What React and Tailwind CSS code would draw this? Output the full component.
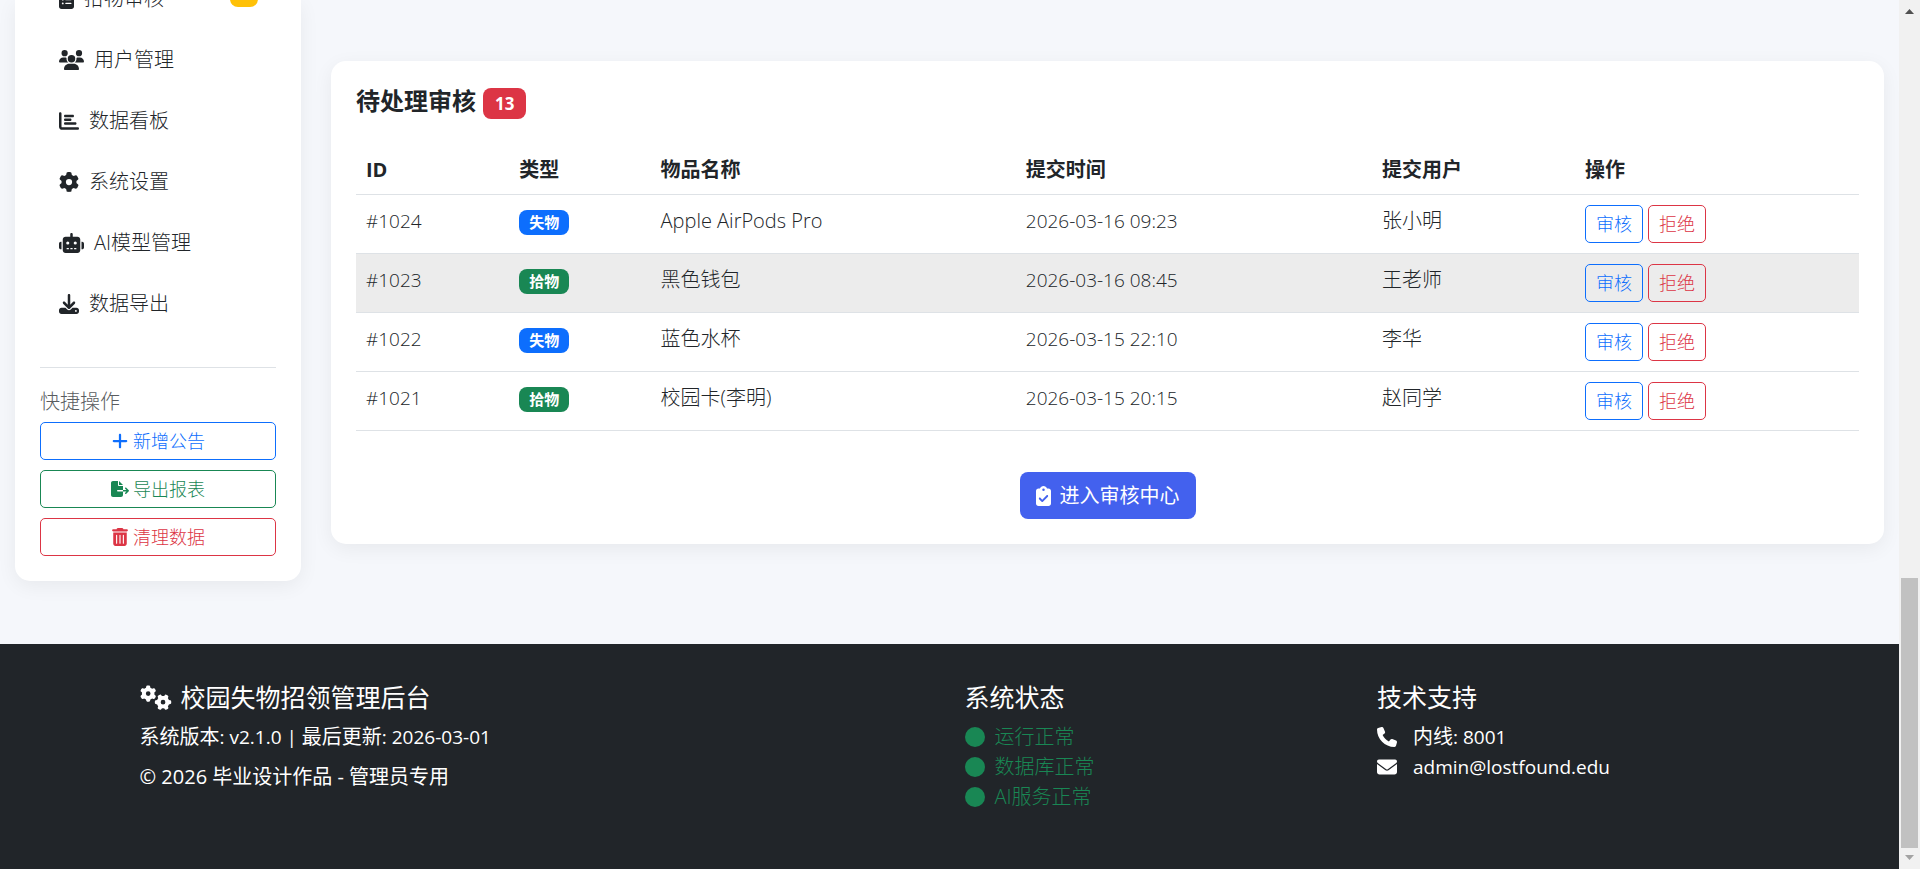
import {
  FaUsers, FaChartBar, FaGear, FaRobot, FaDownload, FaClipboardList, FaPlus, FaFileExport,
  FaTrashCan, FaClipboardCheck, FaGears, FaCircle, FaPhone, FaEnvelope,
} from "react-icons/fa6";

const navItems = [
  { icon: FaClipboardList, label: "拾物审核", size: "h-5 w-[15px]", badge: true },
  { icon: FaUsers, label: "用户管理", size: "h-5 w-[25px]" },
  { icon: FaChartBar, label: "数据看板", size: "size-5" },
  { icon: FaGear, label: "系统设置", size: "size-5" },
  { icon: FaRobot, label: "AI模型管理", size: "h-5 w-[25px]" },
  { icon: FaDownload, label: "数据导出", size: "size-5" },
];

const quickActions = [
  { icon: FaPlus, label: "新增公告", style: "border-[#0d6efd] text-[#0d6efd]" },
  { icon: FaFileExport, label: "导出报表", style: "border-[#198754] text-[#198754]" },
  { icon: FaTrashCan, label: "清理数据", style: "border-[#dc3545] text-[#dc3545]" },
];

const rows = [
  { id: "#1024", lost: true, name: "Apple AirPods Pro", time: "2026-03-16 09:23", user: "张小明" },
  { id: "#1023", lost: false, name: "黑色钱包", time: "2026-03-16 08:45", user: "王老师", active: true },
  { id: "#1022", lost: true, name: "蓝色水杯", time: "2026-03-15 22:10", user: "李华" },
  { id: "#1021", lost: false, name: "校园卡(李明)", time: "2026-03-15 20:15", user: "赵同学" },
];

const columns = [
  { label: "ID", width: "w-[10.2%]" },
  { label: "类型", width: "w-[9.4%]" },
  { label: "物品名称", width: "w-[24.3%]" },
  { label: "提交时间", width: "w-[23.7%]" },
  { label: "提交用户", width: "w-[13.5%]" },
  { label: "操作", width: "w-[18.9%]" },
];

function Sidebar() {
  return (
    <aside className="w-[286px] shrink-0 self-start rounded-b-[15px] bg-white px-[25px] pb-[25px] shadow-[0_5px_20px_rgba(0,0,0,0.06)]">
      <nav className="-mt-8 mb-[33px]">
        {navItems.map(({ icon: Icon, label, size, badge }) => (
          <a key={label} href="#" className="flex h-[61px] items-center gap-[10px] pr-[18px] pl-[19px]">
            <Icon className={size} />
            <span>{label}</span>
            {badge && <span className="mt-[14px] ml-auto h-[25px] w-7 self-start rounded-lg bg-[#ffc107]" />}
          </a>
        ))}
      </nav>
      <hr className="border-[#dee2e6]" />
      <div className="mt-[19px] mb-[5px] text-[#595c5f]">快捷操作</div>
      <div className="flex flex-col gap-[10px]">
        {quickActions.map(({ icon: Icon, label, style }) => (
          <button
            key={label}
            type="button"
            className={`flex h-[38px] items-center justify-center gap-1 rounded-[5px] border text-[18px] ${style}`}
          >
            <Icon className="size-[18px]" />
            {label}
          </button>
        ))}
      </div>
    </aside>
  );
}

function ReviewCard() {
  return (
    <section className="min-w-0 flex-1 self-start rounded-[15px] bg-white p-[25px] shadow-[0_5px_20px_rgba(0,0,0,0.06)]">
      <h2 className="mb-[25px] flex h-[33px] items-start gap-[7px] text-[24px] font-bold">
        待处理审核
        <span className="flex h-[31px] items-center self-end rounded-lg bg-[#dc3545] px-3 text-[17px] text-white">13</span>
      </h2>
      <table className="w-full table-fixed border-collapse text-left">
        <thead>
          <tr className="border-b border-[#dee2e6]">
            {columns.map((c) => (
              <th key={c.label} className={`px-[10px] pt-[11px] pb-[9px] font-bold ${c.width}`}>{c.label}</th>
            ))}
          </tr>
        </thead>
        <tbody>
          {rows.map((r) => (
            <tr key={r.id} className={`border-b border-[#dee2e6] align-top ${r.active ? "bg-[#ececec]" : ""}`}>
              <td className="px-[10px] pt-[11px] text-[19px]">{r.id}</td>
              <td className="p-[10px]">
                <span
                  className={`mt-[5px] inline-block rounded-lg px-[10px] py-[4px] align-top text-[15px] leading-[17px] font-bold text-white ${
                    r.lost ? "bg-[#0d6efd]" : "bg-[#198754]"
                  }`}
                >
                  {r.lost ? "失物" : "拾物"}
                </span>
              </td>
              <td className="px-[10px] pt-[11px]">{r.name}</td>
              <td className="px-[10px] pt-[11px] text-[19px]">{r.time}</td>
              <td className="px-[10px] pt-[11px]">{r.user}</td>
              <td className="p-[10px]">
                <div className="flex gap-[5px]">
                  <button type="button" className="h-[38px] rounded-[5px] border border-[#0d6efd] px-[10px] text-[18px] text-[#0d6efd]">
                    审核
                  </button>
                  <button type="button" className="h-[38px] rounded-[5px] border border-[#dc3545] px-[10px] text-[18px] text-[#dc3545]">
                    拒绝
                  </button>
                </div>
              </td>
            </tr>
          ))}
        </tbody>
      </table>
      <div className="mt-[41px] flex justify-center">
        <button type="button" className="flex h-[47px] items-center gap-[9px] rounded-lg bg-[#4361ee] px-4 font-normal text-white">
          <FaClipboardCheck className="h-5 w-[15px]" />
          进入审核中心
        </button>
      </div>
    </section>
  );
}

function Footer() {
  return (
    <footer className="flex-1 bg-[#212529] pt-[38px] font-normal text-white">
      <div className="mx-auto grid max-w-[1650px] grid-cols-4">
        <div className="col-span-2 px-[15px]">
          <h5 className="mb-[10px] flex items-center gap-[9px] text-[25px]">
            <FaGears className="h-[25px] w-8" />
            校园失物招领管理后台
          </h5>
          <p className="mb-[10px]">
            系统版本<span className="text-[19px]">: v2.1.0 | </span>最后更新
            <span className="text-[19px]">: 2026-03-01</span>
          </p>
          <p>© 2026 毕业设计作品 - 管理员专用</p>
        </div>
        <div className="px-[15px]">
          <h5 className="mb-[10px] text-[25px]">系统状态</h5>
          <ul className="font-light text-[#198754]">
            {["运行正常", "数据库正常", "AI服务正常"].map((s) => (
              <li key={s} className="flex items-center gap-[10px]">
                <FaCircle className="size-5" />
                {s}
              </li>
            ))}
          </ul>
        </div>
        <div className="px-[15px]">
          <h5 className="mb-[10px] text-[25px]">技术支持</h5>
          <ul>
            <li className="flex items-center gap-4">
              <FaPhone className="size-5" />
              <span>内线<span className="text-[19px]">: 8001</span></span>
            </li>
            <li className="flex items-center gap-4">
              <FaEnvelope className="size-5" />
              <span className="text-[19px]">admin@lostfound.edu</span>
            </li>
          </ul>
        </div>
      </div>
    </footer>
  );
}

function ScrollTrack() {
  return (
    <div className="flex w-[21px] shrink-0 flex-col items-center bg-[#f1f1f1]" aria-hidden="true">
      <svg className="h-[21px] w-[9px]" viewBox="0 0 9 21"><path d="M0 14h9L4.5 9z" fill="#505050" /></svg>
      <div className="flex-1" />
      <div className="h-[270px] w-[17px] bg-[#c1c1c1]" />
      <svg className="h-[21px] w-[9px]" viewBox="0 0 9 21"><path d="M0 7h9L4.5 12z" fill="#a3a3a3" /></svg>
    </div>
  );
}

export default function App() {
  return (
    <div className="flex h-screen overflow-hidden bg-[#f5f7fb] font-['Open_Sans','Noto_Sans_CJK_SC',sans-serif] text-[20px] leading-[30px] font-light text-[#212529]">
      <div className="flex min-w-0 flex-1 flex-col">
        <main className="flex gap-[30px] px-[15px] pb-[63px]">
          <Sidebar />
          <div className="flex min-w-0 flex-1 pt-[61px]">
            <ReviewCard />
          </div>
        </main>
        <Footer />
      </div>
      <ScrollTrack />
    </div>
  );
}
